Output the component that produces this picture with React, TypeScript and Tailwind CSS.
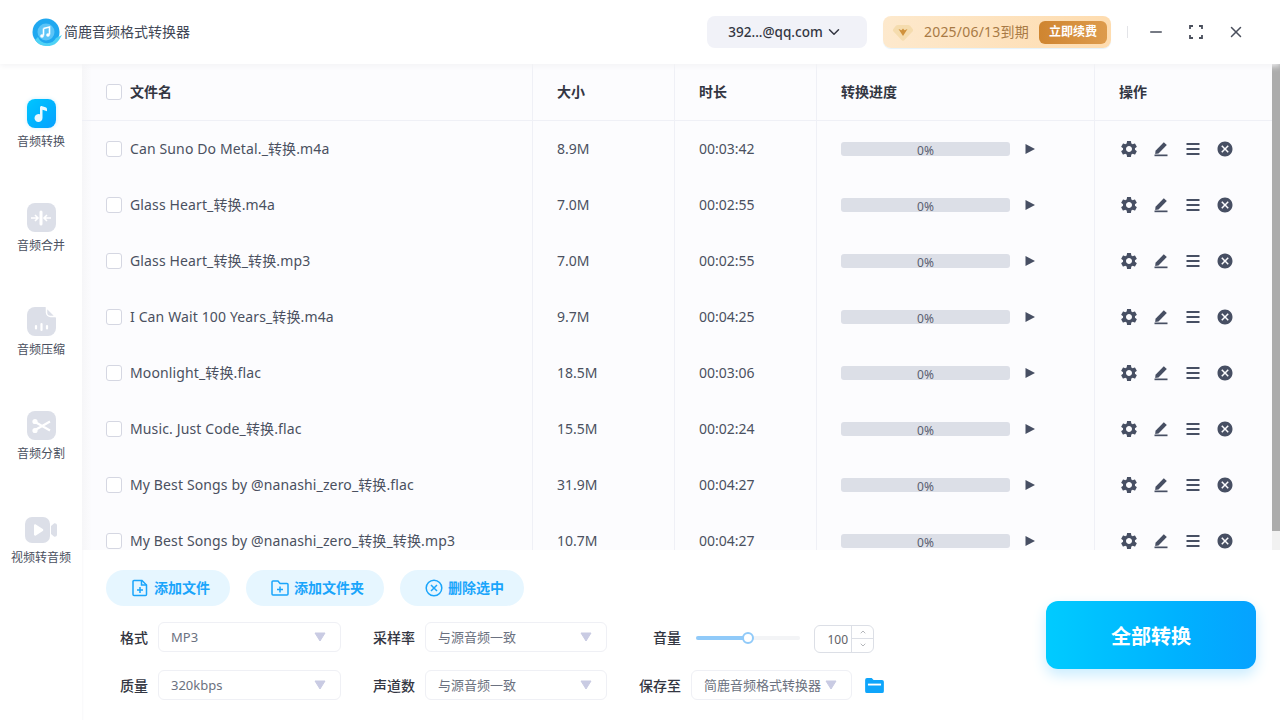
import React from "react";
import { MdSettings, MdCancel } from "react-icons/md";
import { ChevronDown, ChevronUp, Minus, X } from "lucide-react";

const rows = [
  ["Can Suno Do Metal._转换.m4a", "8.9M", "00:03:42"],
  ["Glass Heart_转换.m4a", "7.0M", "00:02:55"],
  ["Glass Heart_转换_转换.mp3", "7.0M", "00:02:55"],
  ["I Can Wait 100 Years_转换.m4a", "9.7M", "00:04:25"],
  ["Moonlight_转换.flac", "18.5M", "00:03:06"],
  ["Music. Just Code_转换.flac", "15.5M", "00:02:24"],
  ["My Best Songs by @nanashi_zero_转换.flac", "31.9M", "00:04:27"],
  ["My Best Songs by @nanashi_zero_转换_转换.mp3", "10.7M", "00:04:27"],
];

function Check() {
  return <span className="w-4 h-4 shrink-0 rounded-[3px] border border-[#d5d7e2] bg-white mr-2" />;
}

function Logo() {
  return (
    <svg width="32" height="28" viewBox="0 0 32 28" className="shrink-0">
      <circle cx="14" cy="14" r="13.5" fill="#20a8f0" />
      <path d="M6 19a10 10 0 0 0 18 1l6-3-3 5a14 14 0 0 1-13 6A14 14 0 0 1 3 22z" fill="#4fd2f5" />
      <circle cx="14" cy="14" r="8.5" fill="#5cc4f7" />
      <path d="M11.5 10.5l6-1.5v7.5" fill="none" stroke="#fff" strokeWidth="1.6" />
      <path d="M11.5 10.5v7" fill="none" stroke="#fff" strokeWidth="1.6" />
      <circle cx="10" cy="18" r="1.8" fill="#fff" />
      <circle cx="16" cy="17" r="1.8" fill="#fff" />
    </svg>
  );
}

function NavTile({ active, children }: { active?: boolean; children: React.ReactNode }) {
  return (
    <div className={active ? "w-[29px] h-[29px] rounded-lg bg-gradient-to-br from-[#00c6ff] to-[#08a0ff] flex items-center justify-center shadow-[0_0_4px_#cdeeff]" : "w-[29px] h-[29px] rounded-lg bg-[#dcdfe8] flex items-center justify-center"}>
      {children}
    </div>
  );
}

function NavItem({ label, icon }: { label: string; icon: React.ReactNode }) {
  return (
    <div className="h-[104px] flex flex-col items-center">
      <div className="h-[29px] flex items-center justify-center">{icon}</div>
      <span className="mt-[6px] text-xs leading-4 text-[#4a5060] whitespace-nowrap">{label}</span>
    </div>
  );
}

function Sidebar() {
  return (
    <aside className="w-[82px] shrink-0 bg-white pt-[35px] flex flex-col">
      <NavItem label="音频转换" icon={
        <NavTile active>
          <svg width="20" height="20" viewBox="0 0 20 20"><path d="M9 3.800c0-1.300 1-2 2.200-1.600l3.300 1.100c.9.300 1.500 1.100 1.500 2v1.900L11.500 5.800v8.200a4 4 0 1 1-2.500-3.700z" fill="#e8f8ff" /></svg>
        </NavTile>} />
      <NavItem label="音频合并" icon={
        <NavTile>
          <svg width="24" height="18" viewBox="0 0 24 18" fill="none" stroke="#fff" strokeWidth="1.600"><path d="M12 3v12" strokeWidth="3" strokeLinecap="round" /><path d="M2 9h6.500M6 6l3 3-3 3M22 9h-6.500M18 6l-3 3 3 3" /></svg>
        </NavTile>} />
      <NavItem label="音频压缩" icon={
        <svg width="29" height="29" viewBox="0 0 29 29"><path d="M8 0h10.500L29 10.500V21a8 8 0 0 1-8 8H8a8 8 0 0 1-8-8V8a8 8 0 0 1 8-8z" fill="#dcdfe8" /><path d="M19.500 0.500l9 9h-5a4 4 0 0 1-4-4z" fill="#dcdfe8" stroke="#fff" strokeWidth="1.500" /><path d="M9 19v2.500M14.500 17v6M20 19v2.500" stroke="#fff" strokeWidth="2.200" strokeLinecap="round" /></svg>} />
      <NavItem label="音频分割" icon={
        <NavTile>
          <svg width="24" height="22" viewBox="0 0 24 22" fill="none" stroke="#fff" strokeWidth="2.200"><path d="M7 7.500l14 8M7 14.500l14-8" /><circle cx="6" cy="6.500" r="2.600" fill="#fff" stroke="none" /><circle cx="6" cy="15.500" r="2.600" fill="#fff" stroke="none" /></svg>
        </NavTile>} />
      <NavItem label="视频转音频" icon={
        <svg width="32" height="26" viewBox="0 0 32 26"><rect x="0" y="0" width="25" height="26" rx="7" fill="#dcdfe8" /><path d="M26 9l3-2.500c1-.7 3 0 3 2v9c0 2-2 2.700-3 2l-3-2.500z" fill="#dcdfe8" /><path d="M9 8.500c0-1 1-1.500 1.800-1l7 4.500c.7.500.7 1.500 0 2l-7 4.500c-.8.500-1.800 0-1.800-1z" fill="#fff" /></svg>} />
    </aside>
  );
}

function RowIcons() {
  return (
    <div className="flex items-center gap-[12px] pl-[24px] text-[#474f63]">
      <MdSettings size={20} className="mr-px" />
      <svg width="18" height="18" viewBox="0 0 18 18" fill="#474f63" className="mr-[2px] mt-[-1px]"><path d="M3.500 10.700L11.800 2.300l3 2.800-8.300 8.500-3.300.3z" /><rect x="2.500" y="14.500" width="13" height="1.700" /></svg>
      <svg width="18" height="18" viewBox="0 0 18 18" fill="#474f63" className="mr-[2px]"><rect x="2.500" y="3" width="13" height="2" /><rect x="2.500" y="8" width="13" height="2" /><rect x="2.500" y="13" width="13" height="2" /></svg>
      <MdCancel size={18} />
    </div>
  );
}

function Table() {
  return (
    <div className="flex-1 min-h-0 overflow-hidden flex bg-[#fcfcfe]">
      <div className="flex-1 min-w-0 bg-gradient-to-r from-[#f6f6f8] to-[#fcfcfe] bg-[length:10px_100%] bg-no-repeat">
        <div className="grid grid-cols-[451px_142px_142px_278px_1fr] h-[57px] border-b border-[#eff0f6] text-sm font-bold text-[#333642]">
          <div className="flex items-center pl-6 border-r border-[#eff0f6]"><Check /><span>文件名</span></div>
          <div className="flex items-center pl-6 border-r border-[#eff0f6]">大小</div>
          <div className="flex items-center pl-6 border-r border-[#eff0f6]">时长</div>
          <div className="flex items-center pl-6 border-r border-[#eff0f6]">转换进度</div>
          <div className="flex items-center pl-6">操作</div>
        </div>
        {rows.map((r) => (
          <div key={r[0]} className="grid grid-cols-[451px_142px_142px_278px_1fr] h-14 text-sm text-[#4a5060]">
            <div className="flex items-center pl-6 border-r border-[#eff0f6] whitespace-nowrap"><Check /><span className="tracking-[0.13px]">{r[0]}</span></div>
            <div className="flex items-center pl-6 border-r border-[#eff0f6]">{r[1]}</div>
            <div className="flex items-center pl-6 border-r border-[#eff0f6]">{r[2]}</div>
            <div className="flex items-center pl-6 border-r border-[#eff0f6]">
              <div className="w-[169px] h-[14px] rounded-[3px] bg-[#dcdfe7] flex items-center justify-center text-xs text-[#5a6070] leading-none pt-[3px]">0%</div>
              <svg width="12" height="12" viewBox="0 0 12 12" className="ml-[14px]"><path d="M1.500 1l9.500 5-9.500 5z" fill="#474f63" /></svg>
            </div>
            <RowIcons />
          </div>
        ))}
      </div>
      <div className="w-2 shrink-0 bg-[#f1f1f1]"><div className="h-[467px] bg-[#acacac]" /></div>
    </div>
  );
}

function Caret() {
  return <svg width="12" height="10" viewBox="0 0 12 10" className="shrink-0"><path d="M1 1h10L6 9z" fill="#c9cbe3" stroke="#c9cbe3" strokeLinejoin="round" /></svg>;
}

function Select({ value, w }: { value: string; w: string }) {
  return (
    <div className={`${w} h-[30px] rounded-md border border-[#eff0f5] bg-white flex items-center justify-between pl-3 pr-[14px] text-[13px] text-[#6b7180]`}>
      <span className="whitespace-nowrap pt-px">{value}</span>
      <Caret />
    </div>
  );
}

function Field({ label, w, children }: { label: string; w: string; children: React.ReactNode }) {
  return (
    <div className="flex items-center h-[30px]">
      <span className={`${w} shrink-0 text-sm font-medium text-[#333642] text-right pr-[10px] whitespace-nowrap pt-px`}>{label}</span>
      {children}
    </div>
  );
}

function ActionBtn({ label, w, icon }: { label: string; w: string; icon: React.ReactNode }) {
  return (
    <div className={`${w} h-9 pl-[5px] rounded-full bg-[#e6f6ff] flex items-center justify-center gap-[5px] text-sm font-bold text-[#1aa5fb]`}>
      {icon}<span>{label}</span>
    </div>
  );
}

function Bottom() {
  return (
    <div className="h-[170px] shrink-0 bg-white flex pl-6 pr-6 shadow-[inset_3px_0_3px_-3px_#f0f0f2]">
      <div className="flex-1 min-w-0 pt-[20px]">
        <div className="flex gap-4">
          <ActionBtn label="添加文件" w="w-[124px]" icon={
            <svg width="18" height="18" viewBox="0 0 18 18" fill="none" stroke="#1aa5fb" strokeWidth="1.500"><path d="M3 1.500h8l4.500 4.500v9.500a1 1 0 0 1-1 1H3a1 1 0 0 1-1-1v-13a1 1 0 0 1 1-1z" /><path d="M10.500 1.500V6h5M6 11h6M9 8v6" /></svg>} />
          <ActionBtn label="添加文件夹" w="w-[138px]" icon={
            <svg width="18" height="18" viewBox="0 0 18 18" fill="none" stroke="#1aa5fb" strokeWidth="1.500"><path d="M1 3a1 1 0 0 1 1-1h5l2 2.500h7a1 1 0 0 1 1 1V15a1 1 0 0 1-1 1H2a1 1 0 0 1-1-1z" /><path d="M6 10.500h6M9 7.500v6" /></svg>} />
          <ActionBtn label="删除选中" w="w-[124px]" icon={
            <svg width="18" height="18" viewBox="0 0 18 18" fill="none" stroke="#1aa5fb" strokeWidth="1.500"><circle cx="9" cy="9" r="7.800" /><path d="M6 6l6 6M12 6l-6 6" /></svg>} />
        </div>
        <div className="flex mt-4">
          <div className="flex flex-col gap-[18px]">
            <Field label="格式" w="w-[52px]"><Select value="MP3" w="w-[183px]" /></Field>
            <Field label="质量" w="w-[52px]"><Select value="320kbps" w="w-[183px]" /></Field>
          </div>
          <div className="flex flex-col gap-[18px] ml-[22px]">
            <Field label="采样率" w="w-[62px]"><Select value="与源音频一致" w="w-[182px]" /></Field>
            <Field label="声道数" w="w-[62px]"><Select value="与源音频一致" w="w-[182px]" /></Field>
          </div>
          <div className="flex flex-col gap-[18px] ml-[22px]">
            <Field label="音量" w="w-[62px]">
              <div className="relative w-[104px] h-1 rounded-full bg-[#f3f4f6] ml-[5px] mt-[2px]">
                <div className="w-[52px] h-1 rounded-full bg-[#90caf9]" />
                <div className="absolute left-[46px] top-[-4px] w-3 h-3 rounded-full bg-white border-2 border-[#90caf9]" />
              </div>
              <div className="ml-[14px] mt-[3px] w-[60px] h-[28px] rounded-md border border-[#dcdfe6] flex text-xs text-[#606266]">
                <span className="flex-1 flex items-center justify-end pt-[2px]">100</span>
                <div className="w-[22px] ml-[3px] border-l border-[#dcdfe6] flex flex-col text-[#909399]">
                  <div className="flex-1 flex items-center justify-center border-b border-[#dcdfe6]"><ChevronUp size={8} /></div>
                  <div className="flex-1 flex items-center justify-center"><ChevronDown size={8} /></div>
                </div>
              </div>
            </Field>
            <Field label="保存至" w="w-[62px]">
              <div className="w-[161px] h-[30px] rounded-md border border-[#eff0f5] bg-white flex items-center justify-between pl-3 pr-[14px] text-[13px] text-[#6b7180]">
                <span className="whitespace-nowrap pt-px">简鹿音频格式转换器</span>
                <Caret />
              </div>
              <svg width="19" height="15" viewBox="0 0 20 16" className="ml-[13px]"><path d="M0 2a2 2 0 0 1 2-2h5l2 2h9a2 2 0 0 1 2 2v10a2 2 0 0 1-2 2H2a2 2 0 0 1-2-2z" fill="#0ea5fb" /><rect x="3" y="6" width="14" height="2" fill="#fff" /></svg>
            </Field>
          </div>
        </div>
      </div>
      <div className="pt-[51px]">
        <div className="w-[210px] h-[68px] pt-[3px] rounded-xl bg-gradient-to-r from-[#00cbff] to-[#06a2ff] shadow-[0_6px_14px_#c8ecff] flex items-center justify-center text-xl font-bold text-white">全部转换</div>
      </div>
    </div>
  );
}

export default function App() {
  return (
    <div className="w-[1280px] h-[720px] overflow-hidden bg-white flex flex-col font-['Noto_Sans','Noto_Sans_CJK_SC',sans-serif]">
      <header className="relative z-10 h-16 shrink-0 bg-white shadow-[0_2px_6px_#f3f3f5] flex items-center pl-8">
        <Logo />
        <span className="text-sm text-[#414756] whitespace-nowrap">简鹿音频格式转换器</span>
        <div className="ml-auto w-[160px] h-8 pr-[3px] rounded-lg bg-[#f1f2f8] flex items-center justify-center gap-[2px] text-[13.5px] font-medium text-[#333642]">
          <span>392...@qq.com</span><ChevronDown size={18} />
        </div>
        <div className="ml-[16px] w-[228px] h-8 rounded-lg bg-gradient-to-r from-[#fde9cd] to-[#fedcaf] shadow-[0_1px_1px_#e4f2fb] flex items-center pl-[9px] text-sm text-[#a87a45]">
          <svg width="22" height="20" viewBox="0 0 22 20" className="shrink-0"><path d="M6 3h10c1 0 1.700.4 2.300 1l2.400 3c.6.800.5 1.800-.2 2.500L12.500 18c-.8.900-2.200.9-3 0L1.500 9.500c-.7-.7-.8-1.700-.2-2.500l2.400-3C4.300 3.400 5 3 6 3z" fill="#f5dcae" /><path d="M6.500 7l4.500 7 4.500-7-3 1.300L11 6.500 9.500 8.300z" fill="#d0923c" /></svg>
          <span className="ml-[10px] whitespace-nowrap tracking-[0.2px]">2025/06/13到期</span>
          <div className="ml-[10px] w-[68px] h-[23px] rounded-md bg-gradient-to-r from-[#cf8530] to-[#dd9b4c] flex items-center justify-center text-xs font-bold text-white">立即续费</div>
        </div>
        <div className="w-px h-[12px] bg-[#e3e4e8] ml-[16px]" />
        <div className="flex items-center gap-[22px] ml-[19px] mr-[35px] text-[#4a4f5c]">
          <Minus size={18} />
          <svg width="18" height="18" viewBox="0 0 18 18" fill="none" stroke="#4a4f5c" strokeWidth="1.800"><path d="M3 6V3h3M12 3h3v3M15 12v3h-3M6 15H3v-3" /></svg>
          <X size={18} />
        </div>
      </header>
      <div className="flex-1 min-h-0 flex">
        <Sidebar />
        <main className="flex-1 min-w-0 flex flex-col">
          <Table />
          <Bottom />
        </main>
      </div>
    </div>
  );
}
